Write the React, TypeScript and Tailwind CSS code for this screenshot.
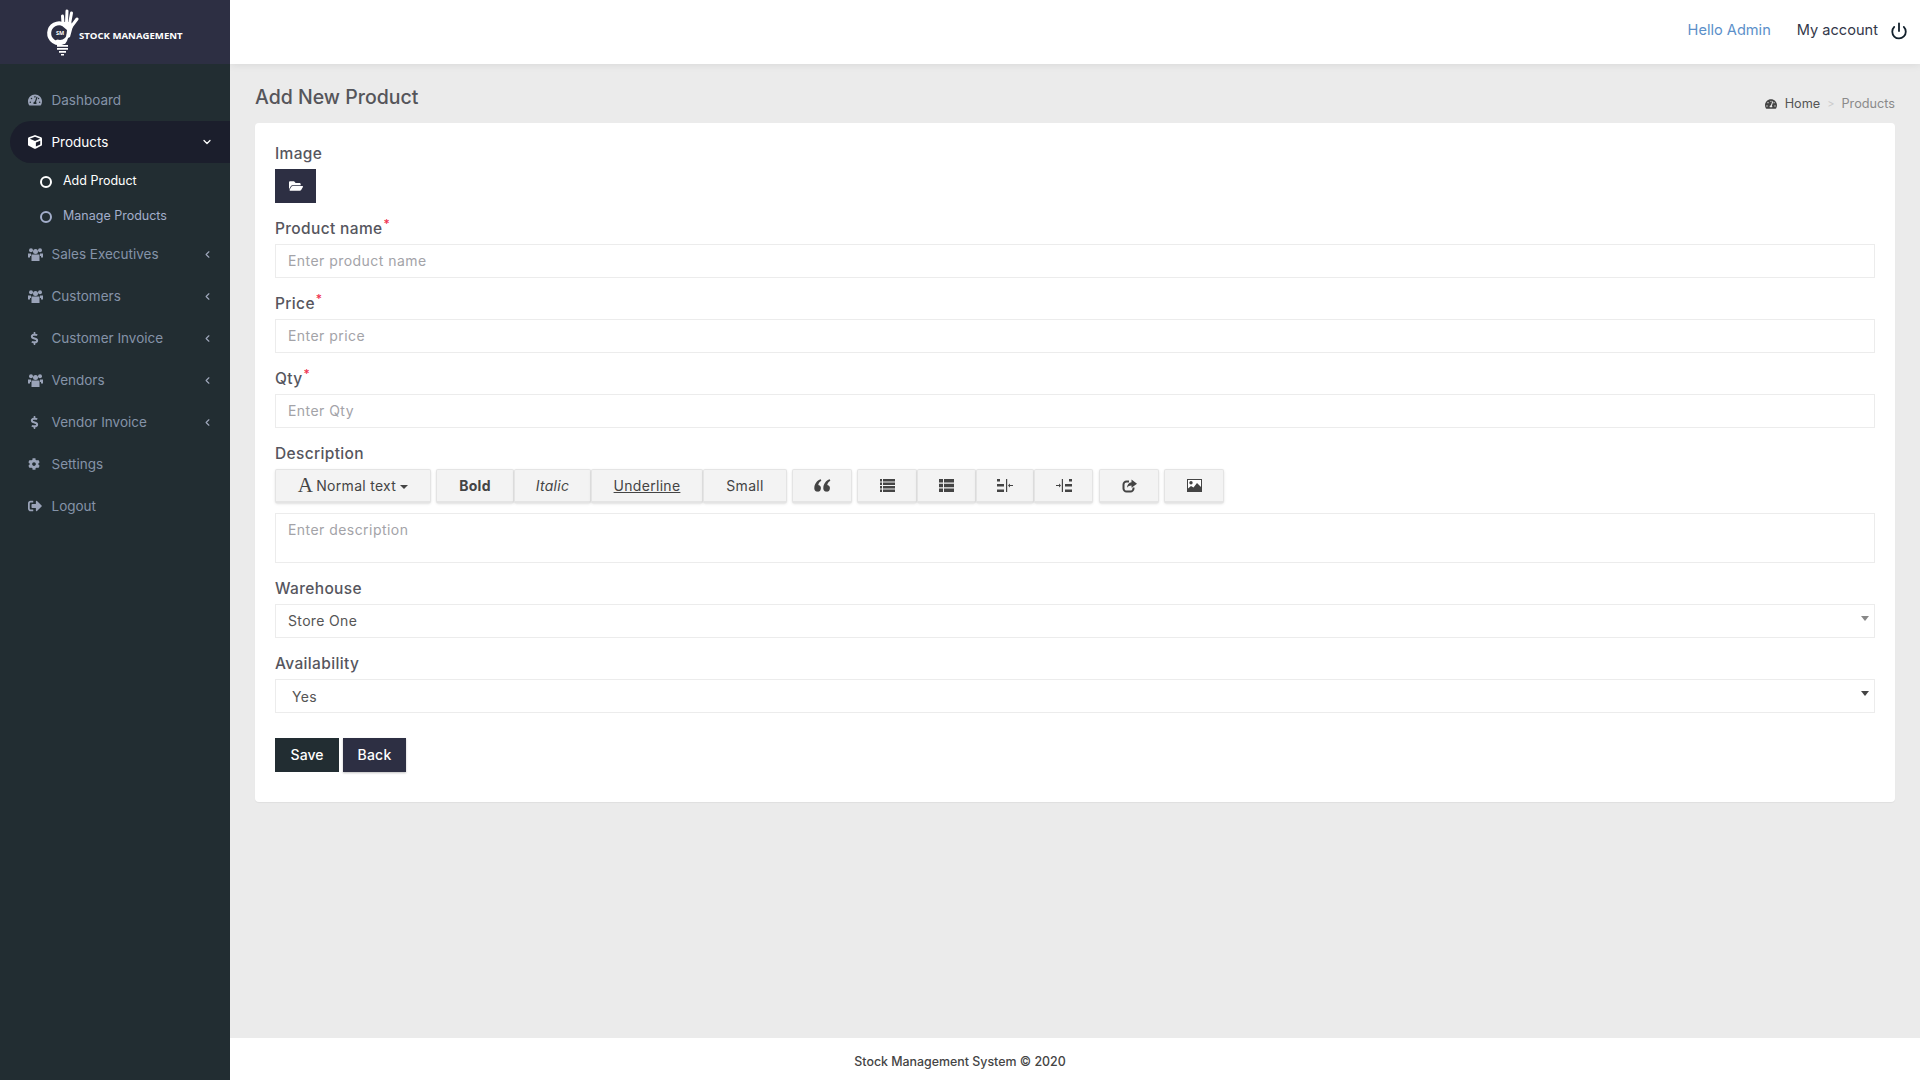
import { ChevronDown, ChevronLeft, Power } from "lucide-react";
import { FaCog, FaDollarSign, FaFolderOpen, FaSignOutAlt, FaTachometerAlt, FaCube } from "react-icons/fa";
import type { ReactNode } from "react";

const font = { fontFamily: "Inter, 'Open Sans', sans-serif" };

function Logo() {
  return (
    <div className="h-16 bg-[#2d2f43] flex items-start pl-[42px] pt-[6px] shrink-0">
      <svg width="37" height="52" viewBox="0 0 37 52" className="shrink-0">
        <path d="M22 18.500 A10 10 0 1 0 21 36.500" fill="none" stroke="#fff" strokeWidth="4" />
        <path d="M13 35 L15 38 H23 L25 35 L28 26 L20 30 Z" fill="#fff" />
        <circle cx="18" cy="27" r="7" fill="#2d2f43" />
        <text x="18" y="29" textAnchor="middle" fontSize="5.5" fontWeight="700" fill="#fff" fontFamily="Open Sans">SM</text>
        <g stroke="#fff" strokeWidth="3" strokeLinecap="round">
          <path d="M25 5 L24.500 17" />
          <path d="M20.500 10 L21 17" />
          <path d="M29.500 7 L27.500 18" />
          <path d="M35 13 L29 21" />
        </g>
        <path d="M19 16 L29 16 L31 20 L28 31 L24 33 L25 24 L19 19 Z" fill="#fff" />
        <path d="M15 39h11v1.800H15zM15 42h11v1.800H15zM17 45h7v1.800h-7zM19 48h3v1.500h-3z" fill="#fff" />
      </svg>
      <span className="text-white text-[9.6px] font-bold mt-[23px] whitespace-nowrap" style={{ fontFamily: "'Open Sans', sans-serif" }}>STOCK MANAGEMENT</span>
    </div>
  );
}

function UsersIcon() {
  return (
    <svg width="15" height="13" viewBox="0 0 15 13" fill="currentColor">
      <circle cx="3" cy="2.300" r="2" />
      <circle cx="12" cy="2.300" r="2" />
      <circle cx="7.500" cy="3.500" r="2.500" />
      <path d="M0 5.500h3v2.500h-1v1.500H0zM15 5.500h-3v2.500h1v1.500h2zM3.500 6.500h8V13h-8z" />
    </svg>
  );
}

function NavItem({ icon, label, arrow }: { icon: ReactNode; label: string; arrow?: boolean }) {
  return (
    <div className="h-[42px] flex items-center pl-[28px] pr-[17px] text-[#8593a8] text-[13.5px]">
      <span className="w-[23.5px] flex items-center text-[#9aa3b8]">{icon}</span>
      <span className="flex-1">{label}</span>
      {arrow && <ChevronLeft size={11} strokeWidth={2.5} className="text-[#a0a8bc]" />}
    </div>
  );
}

function Sidebar() {
  return (
    <aside className="w-[230px] shrink-0 bg-[#222d32] flex flex-col relative z-10">
      <Logo />
      <nav className="pt-[15px]">
        <NavItem icon={<FaTachometerAlt size={14} />} label="Dashboard" />
        <div className="ml-[10px] h-[42px] flex items-center pl-[18px] pr-[17px] bg-[#1b1e2c] rounded-l-full text-white text-[13.5px]">
          <span className="w-[23.5px] flex items-center"><FaCube size={14} /></span>
          <span className="flex-1">Products</span>
          <ChevronDown size={12} strokeWidth={2.5} />
        </div>
        <div className="h-[35px] flex items-center pl-[40px] pt-[2px] text-white text-[12.5px]">
          <span className="w-[12px] h-[12px] rounded-full border-2 border-white mr-[11px]" />
          Add Product
        </div>
        <div className="h-[35px] flex items-center pl-[40px] pt-[2px] text-[#a3aecb] text-[12.5px]">
          <span className="w-[12px] h-[12px] rounded-full border-2 border-[#a3aecb] mr-[11px]" />
          Manage Products
        </div>
        <NavItem icon={<UsersIcon />} label="Sales Executives" arrow />
        <NavItem icon={<UsersIcon />} label="Customers" arrow />
        <NavItem icon={<FaDollarSign size={13} />} label="Customer Invoice" arrow />
        <NavItem icon={<UsersIcon />} label="Vendors" arrow />
        <NavItem icon={<FaDollarSign size={13} />} label="Vendor Invoice" arrow />
        <NavItem icon={<FaCog size={12} />} label="Settings" />
        <NavItem icon={<FaSignOutAlt size={14} />} label="Logout" />
      </nav>
    </aside>
  );
}

function Label({ text, required }: { text: string; required?: boolean }) {
  return (
    <label className="block h-[21px] leading-[21px] mb-[5px] text-[15.5px] tracking-[0.35px] font-medium text-[#56565e]">
      {text}
      {required && <sup className="text-[#f0314f] text-[12px] ml-[1px]">*</sup>}
    </label>
  );
}

function TextField({ label, placeholder }: { label: string; placeholder: string }) {
  return (
    <div className="mb-[15px]">
      <Label text={label} required />
      <input
        placeholder={placeholder}
        className="block w-full h-[34px] border border-[#ececec] px-3 pb-[1px] text-[14px] tracking-[0.45px] text-[#555] placeholder:text-[#a3a3a8] outline-none"
      />
    </div>
  );
}

const toolBtn = "h-[34px] flex items-center justify-center bg-[#f3f3f3] border border-[#e4e4e4] border-b-2 rounded-[2px] text-[#444] text-[14px] tracking-[0.3px] shadow-sm";

function IndentIcon({ flip }: { flip?: boolean }) {
  return (
    <svg width="16" height="13" viewBox="0 0 16 13" fill="#444" className={flip ? "-scale-x-100" : ""}>
      <path d="M0 0h3v2.500H0zM0 5h7v2.500H0zM0 10.500h7V13H0zM9 0h1.200v13H9zM16 6h-3V4.500l-2 2 2 2V7h3z" />
    </svg>
  );
}

function ListIcon() {
  return (
    <svg width="15" height="13" viewBox="0 0 15 13" fill="#444">
      <path d="M0 0h2v2.500H0zM3 0h12v2.500H3zM0 3.500h2V6H0zM3 3.500h12V6H3zM0 7h2v2.500H0zM3 7h12v2.500H3zM0 10.500h2V13H0zM3 10.500h12V13H3z" />
    </svg>
  );
}

function ThListIcon() {
  return (
    <svg width="15" height="13" viewBox="0 0 15 13" fill="#444">
      <path d="M0 0h4v3.500H0zM5 0h10v3.500H5zM0 4.700h4v3.600H0zM5 4.700h10v3.600H5zM0 9.500h4V13H0zM5 9.500h10V13H5z" />
    </svg>
  );
}

function QuoteIcon() {
  return (
    <svg width="17" height="13" viewBox="0 0 17 13" fill="#444">
      <path d="M.3 9.500C.3 5.200 2.800 1.500 6.800.3l.5 1.400C5.300 2.900 4.400 4.500 4.300 6.100A3.300 3.300 0 1 1 .3 9.500z" />
      <path d="M9.300 9.500C9.300 5.200 11.800 1.500 15.800.3l.5 1.400C14.300 2.900 13.400 4.500 13.300 6.100A3.300 3.300 0 1 1 9.300 9.500z" />
    </svg>
  );
}

function ShareIcon() {
  return (
    <svg width="15" height="14" viewBox="0 0 15 14" fill="none">
      <path d="M7 2.500H4.500A3 3 0 0 0 1.500 5.500V9.500A3 3 0 0 0 4.500 12.500H8.500A3 3 0 0 0 11.500 9.500V8.500" stroke="#444" strokeWidth="2" />
      <path d="M9.500 0.500L15 4.800L9.500 8.800V6.500C7.500 6.500 6 7.200 5 8.800C5 5.800 7 3.600 9.500 3.200Z" fill="#444" />
    </svg>
  );
}

function PictureIcon() {
  return (
    <svg width="15" height="13" viewBox="0 0 15 13">
      <rect x="0.500" y="0.500" width="14" height="12" fill="#fff" stroke="#444" />
      <circle cx="4" cy="3.800" r="1.700" fill="#444" />
      <path d="M1 12V9.500L4 7L6.500 8.500L10 4L14 8V12Z" fill="#444" />
    </svg>
  );
}

function Toolbar() {
  return (
    <div className="flex h-[34px]">
      <button className={`${toolBtn} w-[156px]`}>
        <span className="text-[21px] mr-[3px] leading-none" style={{ fontFamily: "'Liberation Serif', serif" }}>A</span>
        Normal text
        <span className="ml-[4px] mt-[2px] border-x-[4px] border-x-transparent border-t-[4px] border-t-[#444]" />
      </button>
      <div className="flex ml-[5px]">
        <button className={`${toolBtn} w-[78px] font-bold`}>Bold</button>
        <button className={`${toolBtn} w-[77px] italic`}>Italic</button>
        <button className={`${toolBtn} w-[112px] underline`}>Underline</button>
        <button className={`${toolBtn} w-[84px]`}>Small</button>
      </div>
      <button className={`${toolBtn} w-[60px] ml-[5px]`}><QuoteIcon /></button>
      <div className="flex ml-[5px]">
        <button className={`${toolBtn} w-[60px]`}><ListIcon /></button>
        <button className={`${toolBtn} w-[59px]`}><ThListIcon /></button>
        <button className={`${toolBtn} w-[58px]`}><IndentIcon /></button>
        <button className={`${toolBtn} w-[59px]`}><IndentIcon flip /></button>
      </div>
      <button className={`${toolBtn} w-[60px] ml-[6px]`}><ShareIcon /></button>
      <button className={`${toolBtn} w-[60px] ml-[5px]`}><PictureIcon /></button>
    </div>
  );
}

function SelectField({ label, value, className, arrow }: { label: string; value: string; className: string; arrow: string }) {
  return (
    <div className="mb-[15px]">
      <Label text={label} />
      <div className="relative">
        <select className={`block w-full h-[34px] border border-[#ececec] text-[14px] tracking-[0.35px] text-[#555] appearance-none outline-none bg-white ${className}`}>
          <option>{value}</option>
        </select>
        <span className={`absolute right-[6px] top-[12px] border-x-[4px] border-x-transparent border-t-[5px] ${arrow}`} />
      </div>
    </div>
  );
}

export default function App() {
  return (
    <div className="flex min-h-[1080px] bg-[#ebebeb]" style={font}>
      <Sidebar />
      <div className="flex-1 flex flex-col min-w-0">
        <header className="h-16 shrink-0 bg-white shadow-[0_1px_8px_rgba(0,0,0,0.08)] flex items-center justify-end pr-[12px] pb-[3px] text-[14.6px]">
          <span className="text-[#5b8fc9]">Hello Admin</span>
          <span className="text-[#33384a] ml-[26px]">My account</span>
          <Power size={18} strokeWidth={2.4} className="text-[#12202c] ml-[12px]" />
        </header>
        <main className="flex-1 px-[25px]">
          <div className="h-[59px] flex items-start justify-between">
            <h1 className="mt-[20px] text-[19.5px] leading-[26px] font-medium text-[#55555a]">Add New Product</h1>
            <div className="mt-[32px] flex items-center text-[12.7px] leading-4">
              <FaTachometerAlt size={12} className="text-[#444] mr-[8px]" />
              <span className="text-[#555]">Home</span>
              <span className="text-[#ccc] mx-[7px] text-[11px]">&gt;</span>
              <span className="text-[#8a8a8a]">Products</span>
            </div>
          </div>
          <form className="bg-white rounded-[4px] px-[20px] pt-[20px] pb-[30px] shadow-[0_1px_1px_rgba(0,0,0,0.05)]">
            <div className="mb-[15px]">
              <Label text="Image" />
              <button type="button" className="w-[41px] h-[34px] bg-[#2d2f43] flex items-center justify-center text-white">
                <FaFolderOpen size={14} />
              </button>
            </div>
            <TextField label="Product name" placeholder="Enter product name" />
            <TextField label="Price" placeholder="Enter price" />
            <TextField label="Qty" placeholder="Enter Qty" />
            <div className="mb-[15px]">
              <Label text="Description" />
              <Toolbar />
              <textarea
                placeholder="Enter description"
                className="block w-full h-[50px] mt-[10px] border border-[#ececec] px-3 py-[5px] text-[14px] tracking-[0.45px] placeholder:text-[#a3a3a8] outline-none resize-none"
              />
            </div>
            <SelectField label="Warehouse" value="Store One" className="pl-3 pb-[1px]" arrow="border-t-[#888]" />
            <SelectField label="Availability" value="Yes" className="pl-4 pt-[1px]" arrow="border-t-[#444]" />
            <div className="flex gap-[4px] mt-[25px]">
              <button type="button" className="w-[64px] h-[34px] bg-[#222d32] text-white text-[14px] font-medium pb-[1px]">Save</button>
              <button type="button" className="w-[63px] h-[34px] bg-[#2d2f43] text-white text-[14px] tracking-[0.2px] font-medium pb-[1px] shadow-[0_1px_2px_rgba(0,0,0,0.25)]">Back</button>
            </div>
          </form>
        </main>
        <footer className="h-[42px] shrink-0 bg-white flex items-center justify-center pr-[230px] pt-[6px] text-[12.4px] font-medium text-[#444]">
          Stock Management System © 2020
        </footer>
      </div>
    </div>
  );
}
